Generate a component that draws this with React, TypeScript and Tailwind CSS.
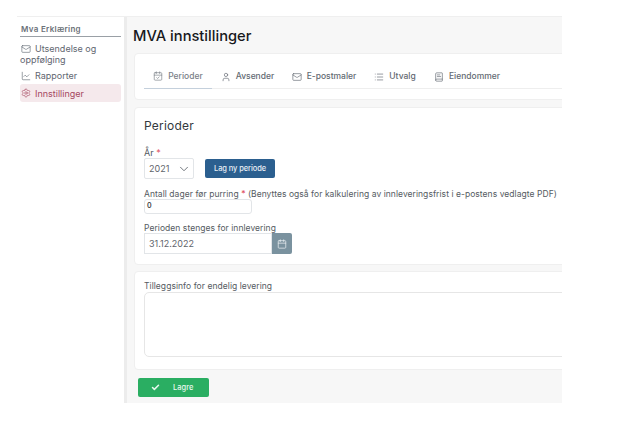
import React from "react";
import {
  BookText,
  Calendar,
  CalendarCheck,
  ChevronDown,
  Check,
  ChartLine,
  List,
  Mail,
  Settings,
  User,
} from "lucide-react";

const tabs = [
  { label: "Perioder", icon: CalendarCheck, active: true, width: "w-[68px]" },
  { label: "Avsender", icon: User, active: false, width: "w-[71px]" },
  { label: "E-postmaler", icon: Mail, active: false, width: "w-[82px]" },
  { label: "Utvalg", icon: List, active: false, width: "w-[60px]" },
  { label: "Eiendommer", icon: BookText, active: false, width: "w-[84px]" },
];

function Sidebar() {
  return (
    <aside className="w-[107px] shrink-0 bg-white pr-[3px] pl-[3px] pt-[7px] text-[9px] text-[#5f6670]">
      <div className="mb-[3px] border-b border-[#9aa0a6] pb-[1px] pl-[1px] text-[8px] leading-[11px] font-semibold tracking-[0.3px] text-[#6b7178]">
        Mva Erklæring
      </div>
      <div className="leading-[11px]">
        <div className="pt-[3px]">
          <Mail size={10} strokeWidth={1.5} className="mr-[4px] ml-[1px] inline-block align-[-2px]" />
          Utsendelse og
          <br />
          oppfølging
        </div>
        <div className="mt-[2px] flex h-[17px] items-center pl-[1px]">
          <ChartLine size={10} strokeWidth={1.5} className="mr-[4px]" />
          Rapporter
        </div>
        <div className="flex h-[18px] items-center rounded-[3px] bg-[#f5e9ec] pl-[1px] text-[#a5475f]">
          <Settings size={10} strokeWidth={1.5} className="mr-[4px]" />
          Innstillinger
        </div>
      </div>
    </aside>
  );
}

function Tabs() {
  return (
    <div className="h-[47px] w-[440px] rounded-[4px] border border-[#efefef] bg-white pt-[10px] pl-[9px]">
      <div className="flex h-[25px] border-b border-[#eeeeee]">
        {tabs.map((tab) => {
          const Icon = tab.icon;
          return (
            <div
              key={tab.label}
              className={`flex h-[25px] items-center justify-center gap-[5px] text-[8.5px] font-medium ${tab.width} ${
                tab.active ? "border-b border-[#c4d0dc] text-[#7a8088]" : "text-[#636a72]"
              }`}
            >
              <Icon size={10} strokeWidth={1.6} />
              {tab.label}
            </div>
          );
        })}
      </div>
    </div>
  );
}

function Form() {
  return (
    <div className="mt-[7px] h-[158px] w-[440px] rounded-[4px] border border-[#efefef] bg-white pt-[10px] pl-[9px] text-[9px] text-[#555b62]">
      <h2 className="text-[12px] leading-[15px] tracking-[0.2px] text-[#33383d]">Perioder</h2>
      <div className="mt-[15px] leading-[10px]">
        År <span className="text-[#e05060]">*</span>
      </div>
      <div className="flex items-center">
        <div className="flex h-[21px] w-[50px] items-center justify-between rounded-[2px] border border-[#e2e5e8] pr-[2px] pl-[4px] text-[#5f656c]">
          2021
          <ChevronDown size={14} strokeWidth={1.5} />
        </div>
        <button className="ml-[11px] h-[19px] w-[70px] rounded-[2px] bg-[#2b5f8f] text-[7.5px] font-medium tracking-[-0.1px] text-[#e8eef4]">
          Lag ny periode
        </button>
      </div>
      <div className="mt-[10px] text-[8.5px] leading-[10px] tracking-[0.05px] whitespace-nowrap">
        Antall dager før purring <span className="text-[#e05060]">*</span> (Benyttes også for kalkulering av
        innleveringsfrist i e-postens vedlagte PDF)
      </div>
      <div className="flex h-[15px] w-[108px] items-center rounded-[3px] border border-[#e2e5e8] pl-[2px] text-[7px] font-semibold text-[#444]">
        0
      </div>
      <div className="mt-[9px] text-[8.5px] leading-[10px] tracking-[0.05px]">Perioden stenges for innlevering</div>
      <div className="flex">
        <div className="flex h-[21px] w-[128px] items-center border border-[#e2e5e8] pl-[4px] text-[#5f656c]">
          31.12.2022
        </div>
        <div className="flex h-[21px] w-[20px] items-center justify-center rounded-r-[2px] bg-[#7a929f] text-[#e8eef0]">
          <Calendar size={10} strokeWidth={1.8} />
        </div>
      </div>
    </div>
  );
}

function ExtraInfo() {
  return (
    <div className="mt-[6px] h-[99px] w-[440px] rounded-[4px] border border-[#efefef] bg-white pt-[9px] pl-[9px] text-[9px] text-[#555b62]">
      <div className="text-[8.5px] leading-[11px] tracking-[0.05px]">Tilleggsinfo for endelig levering</div>
      <div className="h-[65px] w-[440px] rounded-[5px] border border-[#e6e6e6]" />
    </div>
  );
}

export default function App() {
  return (
    <div className="h-[440px] w-[641px] bg-white pt-[16px] pl-[17px] font-['Inter',sans-serif]">
      <div className="flex h-[387px] w-[545px] overflow-hidden border-t border-[#efefef]">
        <Sidebar />
        <main className="flex-1 overflow-hidden border-l-[3px] border-[#ececec] bg-[#f7f7f7] pl-[7px]">
          <h1 className="mt-[9px] -ml-[1px] h-[27px] text-[14.7px] leading-[20px] font-medium whitespace-nowrap text-[#17191c]">
            MVA innstillinger
          </h1>
          <Tabs />
          <Form />
          <ExtraInfo />
          <button className="mt-[8px] ml-[4px] flex h-[19px] w-[71px] items-center rounded-[2px] bg-[#2aae62] pl-[13px] text-[7.5px] font-medium text-[#e8f8ee]">
            <Check size={9} strokeWidth={4} />
            <span className="ml-[13px]">Lagre</span>
          </button>
        </main>
      </div>
    </div>
  );
}
